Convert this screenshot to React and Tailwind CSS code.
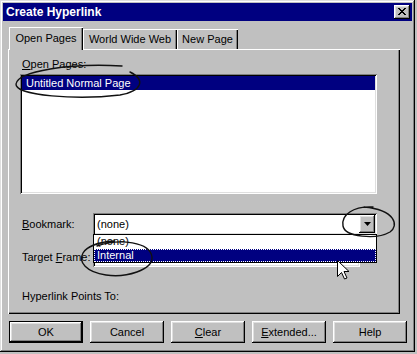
import React from 'react';

const raised = 'shadow-[inset_-1px_-1px_0_#000,inset_1px_1px_0_#fff,inset_-2px_-2px_0_#808080,inset_2px_2px_0_#dfdfdf]';
const sunken = 'shadow-[inset_1px_1px_0_#808080,inset_-1px_-1px_0_#fff,inset_2px_2px_0_#000,inset_-2px_-2px_0_#dfdfdf]';
const defaultBtn = 'shadow-[inset_0_0_0_1px_#000,inset_-2px_-2px_0_#000,inset_2px_2px_0_#fff,inset_-3px_-3px_0_#808080,inset_3px_3px_0_#dfdfdf]';

const Btn = ({ children, isDefault }) => (
  <div
    className={`w-[74px] h-[22px] flex items-center justify-center text-black bg-[#c0c0c0] ${isDefault ? defaultBtn : raised}`}
  >
    {children}
  </div>
);

const Tab = ({ label, active, width }) => (
  <div
    className={`${width} flex items-center justify-center bg-[#c0c0c0] ${
      active
        ? 'h-[23px] -mb-px relative z-10 shadow-[inset_1px_1px_0_#fff,inset_-1px_0_0_#000,inset_-2px_0_0_#808080]'
        : 'h-[20px] shadow-[inset_1px_1px_0_#fff,inset_-1px_0_0_#000,inset_-2px_0_0_#808080]'
    }`}
  >
    {label}
  </div>
);

const App = () => {
  return (
    <div className="w-[417px] h-[354px] bg-[#c0c0c0] relative overflow-hidden font-['Liberation_Sans',Arial,sans-serif] text-[11px] text-black">
      <div className="w-[415px] h-[352px] p-[3px] bg-[#c0c0c0] shadow-[inset_-1px_-1px_0_#000,inset_1px_1px_0_#dfdfdf,inset_-2px_-2px_0_#808080,inset_2px_2px_0_#fff]">
        {/* title bar */}
        <div className="h-[18px] bg-[#000080] flex items-center justify-between pl-[3px] pr-[2px]">
          <span className="text-white font-bold text-[12px] leading-[18px]">Create Hyperlink</span>
          <div className={`w-[16px] h-[14px] bg-[#c0c0c0] flex items-center justify-center ${raised}`}>
            <svg width="8" height="7" viewBox="0 0 8 7" className="-mt-px">
              <path d="M0 0h2v1h1v1h2V1h1V0h2v1H7v1H6v1H5v1h1v1h1v1h1v1H6V6H5V5H3v1H2v1H0V6h1V5h1V4h1V3H2V2H1V1H0z" fill="#000" />
            </svg>
          </div>
        </div>

        {/* tabs */}
        <div className="mt-[6px] ml-[6px] h-[22px] flex items-end">
          <Tab label="Open Pages" active width="w-[74px]" />
          <Tab label="World Wide Web" width="w-[94px]" />
          <Tab label="New Page" width="w-[61px]" />
        </div>

        {/* panel */}
        <div className="ml-[5px] w-[392px] h-[265px] pt-[8px] pl-[12px] shadow-[inset_1px_1px_0_#fff,inset_-1px_-1px_0_#000,inset_-2px_-2px_0_#808080]">
          <div className="h-[14px] leading-[14px] pl-[2px]">
            <span className="underline decoration-1 underline-offset-[1px]">O</span>pen Pages:
          </div>
          <div className={`mt-[3px] w-[357px] h-[120px] bg-white p-[2px] ${sunken}`}>
            <div className="h-[14px] leading-[14px] bg-[#000080] text-white pl-[4px]">Untitled Normal Page</div>
          </div>

          <div className="mt-[19px] h-[22px] flex items-center">
            <span className="w-[73px] pl-[2px]">
              <span className="underline decoration-1 underline-offset-[1px]">B</span>ookmark:
            </span>
            <div className={`relative z-20 w-[284px] h-[22px] bg-white ${sunken}`}>
              <div className="pl-[4px] leading-[22px]">(none)</div>
              <div className={`absolute right-[2px] top-[2px] w-[16px] h-[18px] bg-[#c0c0c0] flex items-center justify-center ${raised}`}>
                <svg width="7" height="4" viewBox="0 0 7 4">
                  <path d="M0 0h7L3.5 4z" fill="#000" />
                </svg>
              </div>
              <div className="absolute left-0 top-[21px] w-[284px] h-[29px] bg-white border border-black">
                <div className="h-[14px] leading-[13px] pl-[3px]">(none)</div>
                <div className="h-[13px] leading-[11px] bg-[#000080] text-white pl-[2px] border border-dotted border-white">
                  Internal
                </div>
              </div>
            </div>
          </div>

          <div className="mt-[12px] h-[20px] flex items-center">
            <span className="w-[73px] pl-[2px]">
              Target <span className="underline decoration-1 underline-offset-[1px]">F</span>rame:
            </span>
            <div className={`w-[267px] h-[20px] bg-white ${sunken}`} />
          </div>

          <div className="mt-[22px] h-[14px] leading-[14px] pl-[2px]">Hyperlink Points To:</div>
        </div>

        {/* buttons */}
        <div className="mt-[7px] ml-[6px] flex gap-[7px]">
          <Btn isDefault>OK</Btn>
          <Btn>Cancel</Btn>
          <Btn>
            <span><span className="underline decoration-1 underline-offset-[1px]">C</span>lear</span>
          </Btn>
          <Btn>
            <span><span className="underline decoration-1 underline-offset-[1px]">E</span>xtended...</span>
          </Btn>
          <Btn>Help</Btn>
        </div>
      </div>

      {/* hand-drawn annotations and mouse pointer */}
      <svg className="absolute inset-0 pointer-events-none z-30" width="417" height="354" viewBox="0 0 417 354">
        <g fill="none" stroke="#111" strokeWidth="1.4" strokeLinecap="round">
          <path d="M122 66 C70 63, 18 71, 16 84 C15 96, 78 100, 120 95 C142 91, 146 80, 130 72" />
          <path d="M373 207 C353 206, 341 215, 343 226 C345 237, 376 240, 390 232 C399 226, 396 210, 364 207" />
          <path d="M97 246 C120 238, 150 242, 152 257 C153 270, 126 278, 106 275 C86 272, 78 262, 83 253 C87 246, 100 242, 114 241" />
        </g>
        <g transform="translate(337.5 260.5)">
          <path d="M0 0 L0 16 L4 12 L7 18.5 L9.5 17.5 L6.5 11 L11.5 11 Z" fill="#fff" stroke="#000" strokeWidth="1" strokeLinejoin="miter" />
        </g>
      </svg>
    </div>
  );
};

export default App;
